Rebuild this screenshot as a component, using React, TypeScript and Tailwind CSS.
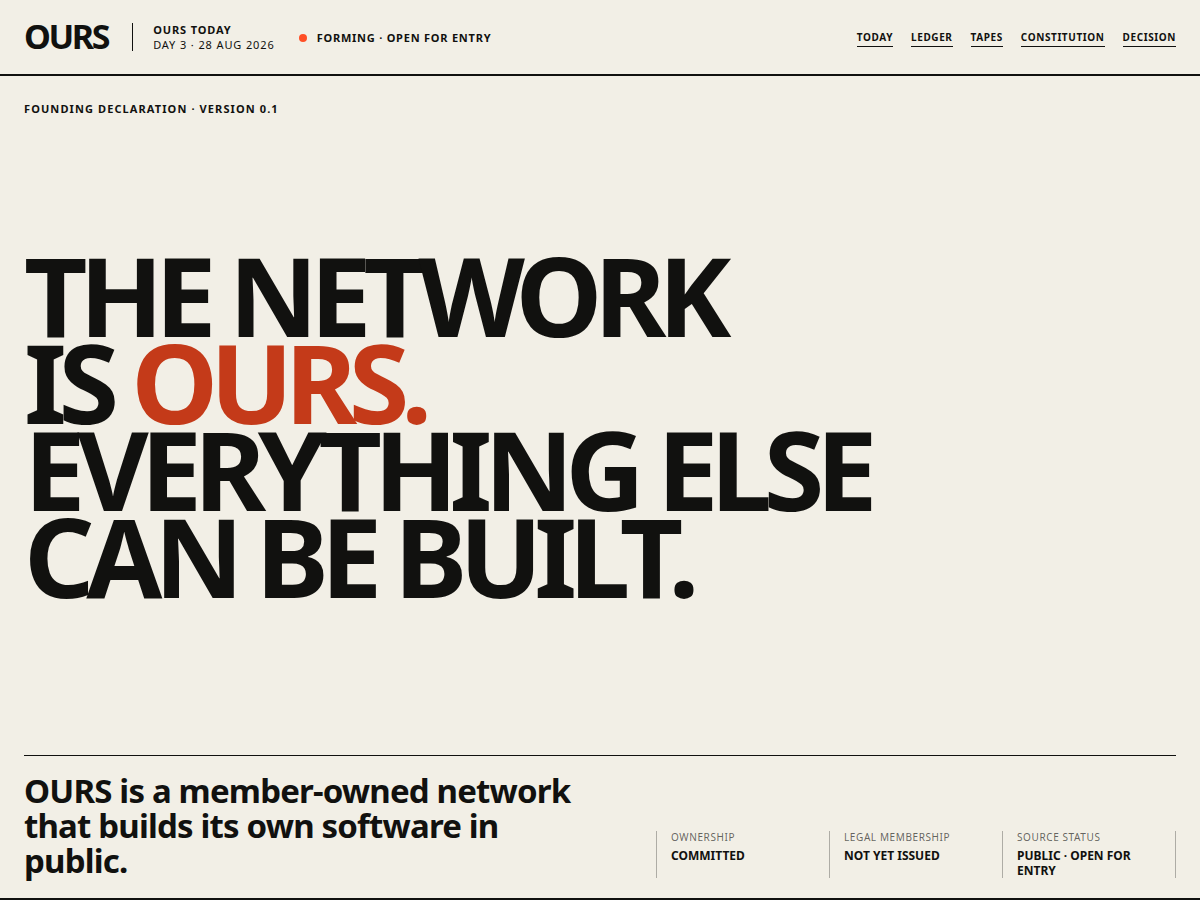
const navLinks = [
  { label: "Today", href: "#today" },
  { label: "Ledger", href: "#ledger" },
  { label: "Tapes", href: "#tapes" },
  { label: "Constitution", href: "#constitution" },
  { label: "Decision", href: "#decision" },
];

const facts = [
  { label: "Ownership", value: "Committed" },
  { label: "Legal membership", value: "Not yet issued" },
  { label: "Source status", value: "Public · Open for entry" },
];

function Header() {
  return (
    <header className="flex h-19 items-center justify-between border-b-2 border-[#11110f] px-6">
      <div className="flex items-center">
        <a href="#top" className="pb-0.5 text-[34px] leading-none font-bold tracking-[-0.07em]">
          OURS
        </a>
        <span className="ml-6 h-7 w-px bg-[#11110f]" />
        <div className="ml-5 text-[11px] leading-[15px] tracking-[0.08em] uppercase">
          <strong className="block font-bold">Ours today</strong>
          <span className="block">Day 3 · 28 Aug 2026</span>
        </div>
        <p className="ml-6 flex items-center gap-2.5 pt-0.5 text-[11px] leading-4 font-bold tracking-[0.07em] uppercase">
          <span className="size-2 rounded-full bg-[#ff4f26]" />
          Forming · Open for entry
        </p>
      </div>
      <nav className="flex gap-4.5 pt-0.5">
        {navLinks.map((link) => (
          <a
            key={link.href}
            href={link.href}
            className="border-b border-[#11110f] pb-0.5 text-[10px] leading-[14px] font-bold tracking-[0.06em] uppercase"
          >
            {link.label}
          </a>
        ))}
      </nav>
    </header>
  );
}

export default function App() {
  return (
    <div
      id="top"
      className="flex min-h-screen flex-col bg-[#f2efe6] font-['Noto_Sans',sans-serif] text-[#11110f]"
    >
      <Header />
      <main className="flex grow flex-col justify-between border-b-2 border-[#11110f] px-6 pt-6 pb-5">
        <p className="text-[11px] leading-[18px] font-bold tracking-[0.1em] uppercase">
          Founding declaration · Version 0.1
        </p>

        <h1 className="pb-6 text-[110px] leading-[87px] font-bold tracking-[-0.075em] uppercase">
          The network
          <br />
          is <span className="text-[#c43a19]">ours.</span>
          <br />
          Everything else
          <br />
          can be built.
        </h1>

        <div className="grid grid-cols-[1fr_520px] items-end gap-8 border-t border-[#11110f] pt-[17px]">
          <p className="max-w-[560px] text-[33px] leading-[35px] font-bold tracking-[-0.025em]">
            OURS is a member-owned network that builds its own software in public.
          </p>
          <dl className="grid grid-cols-3 border-r border-[#11110f]/30">
            {facts.map((fact) => (
              <div key={fact.label} className="border-l border-[#11110f]/30 px-3.5">
                <dt className="text-[10px] leading-[13px] tracking-[0.06em] text-[#11110f]/65 uppercase">
                  {fact.label}
                </dt>
                <dd className="mt-1 text-[12px] leading-[15px] font-bold uppercase">{fact.value}</dd>
              </div>
            ))}
          </dl>
        </div>
      </main>
    </div>
  );
}
